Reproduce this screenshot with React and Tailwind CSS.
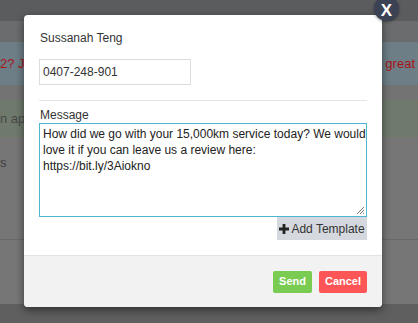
export default function App() {
  return (
    <div className="relative h-[323px] w-[418px] overflow-hidden bg-[#767676] font-['Liberation_Sans',Arial,sans-serif]">
      {/* page behind the overlay */}
      <div className="flex h-full flex-col">
        <div className="h-[21px] bg-[#5b5c5e]" />
        <div className="h-[21px] bg-[#6b6c6d]" />
        <div className="flex h-[43px] items-center justify-between bg-[#6d7e86] pr-[3px] text-[13px] text-[#a8141a]">
          <span className="w-[24px] overflow-hidden whitespace-nowrap">2? Jo</span>
          <span>a great</span>
        </div>
        <div className="h-[15px] bg-[#737373]" />
        <div className="flex h-[37px] items-center bg-[#6f7a6c] text-[13px] text-[#474947]">
          <span className="w-[24px] overflow-hidden whitespace-nowrap">n app</span>
        </div>
        <div className="h-[103px] border-b border-[#686868] bg-[#767676] pt-[16px] text-[13px] text-[#3f3f3f]">
          <span>s</span>
        </div>
        <div className="h-[64px] bg-[#767676]" />
        <div className="flex-1 bg-[#5f5f5f]" />
      </div>

      {/* modal */}
      <div className="absolute left-[24px] top-[15px] flex h-[292px] w-[358px] flex-col rounded-[4px] bg-white shadow-[0_3px_9px_rgba(0,0,0,0.5)]">
        <div className="flex flex-1 flex-col px-[15px] pt-[15px] text-[12px] text-[#333]">
          <div className="ml-[1px] leading-[16px]">Sussanah Teng</div>
          <div className="mt-[13px] flex h-[26px] w-[152px] items-center border border-[#dcdcdc] px-[3px] text-[12px] text-[#333]">
            0407-248-901
          </div>
          <div className="mt-[15px] h-px bg-[#e5e5e5]" />
          <div className="ml-[1px] mt-[6px] leading-[16px]">Message</div>
          <div className="relative h-[94px] whitespace-nowrap border border-[#4fb6d2] px-[3px] pt-[2px] text-[12px] leading-[16px] text-[#222]">
            <div>How did we go with your 15,000km service today? We would</div>
            <div>love it if you can leave us a review here:</div>
            <div>https://bit.ly/3Aiokno</div>
            <svg className="absolute bottom-[2px] right-[2px]" width="8" height="8" viewBox="0 0 8 8">
              <path d="M8 1 L1 8 M8 4 L4 8 M8 7 L7 8" stroke="#777" strokeWidth="1" />
            </svg>
          </div>
          <div className="flex justify-end">
            <div className="flex h-[23px] w-[90px] items-center justify-center gap-[2px] bg-[#d5d8de] text-[12px] text-[#333]">
              <svg width="10" height="10" viewBox="0 0 10 10">
                <path d="M3.6 0h2.8v3.6H10v2.8H6.4V10H3.6V6.4H0V3.6h3.6z" fill="#222" />
              </svg>
              <span>Add Template</span>
            </div>
          </div>
        </div>
        <div className="flex h-[52px] items-center justify-end gap-[7px] rounded-b-[4px] border-t border-[#e3e3e3] bg-[#f2f2f2] pr-[15px]">
          <div className="flex h-[22px] w-[39px] items-center justify-center rounded-[2px] bg-[#79cb52] text-[11px] font-bold text-white">
            Send
          </div>
          <div className="flex h-[22px] w-[48px] items-center justify-center rounded-[2px] bg-[#fe5656] text-[11px] font-bold text-white">
            Cancel
          </div>
        </div>
      </div>

      {/* close badge */}
      <div className="absolute left-[374px] top-[-4px] flex h-[25px] w-[25px] items-center justify-center rounded-full bg-[#3b4254] text-[17px] font-bold leading-none text-white shadow-[0_1px_3px_rgba(0,0,0,0.4)]">
        <span className="mt-[3px]">X</span>
      </div>
    </div>
  );
}
